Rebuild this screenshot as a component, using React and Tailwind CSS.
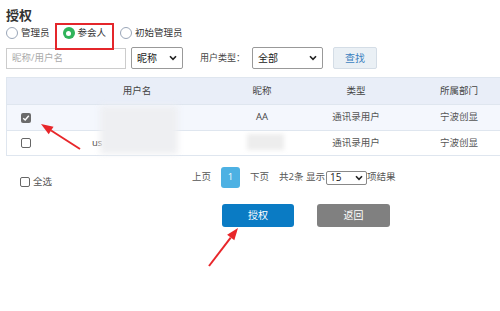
import React from 'react';

const font = { fontFamily: '"Open Sans", "Noto Sans CJK SC", sans-serif' };

const Radio = ({ checked, label }) => (
  <label className="flex items-center gap-[3px]">
    {checked ? (
      <span className="w-[12px] h-[12px] rounded-full bg-[#2fb35a] flex items-center justify-center">
        <span className="w-[5px] h-[5px] rounded-full bg-white" />
      </span>
    ) : (
      <span className="w-[12px] h-[12px] rounded-full border border-[#9aa6b8] bg-white" />
    )}
    <span className="text-[9.5px] text-[#333]">{label}</span>
  </label>
);

const Check = ({ checked }) =>
  checked ? (
    <span className="w-[10px] h-[10px] rounded-[2px] bg-[#6b6b6b] flex items-center justify-center">
      <svg width="8" height="8" viewBox="0 0 8 8">
        <path d="M1.2 4.2 L3.2 6 L6.8 1.8" stroke="#fff" strokeWidth="1.4" fill="none" />
      </svg>
    </span>
  ) : (
    <span className="block w-[10px] h-[10px] rounded-[2px] border border-[#666] bg-white" />
  );

const Caret = () => (
  <svg width="8" height="6" viewBox="0 0 8 6">
    <path d="M1 1.2 L4 4.3 L7 1.2" stroke="#222" strokeWidth="1.6" fill="none" />
  </svg>
);

const Arrow = ({ x1, y1, x2, y2 }) => {
  const dx = x2 - x1;
  const dy = y2 - y1;
  const len = Math.sqrt(dx * dx + dy * dy);
  const ux = dx / len;
  const uy = dy / len;
  const bx = x2 - ux * 12;
  const by = y2 - uy * 12;
  const px = -uy * 4.5;
  const py = ux * 4.5;
  return (
    <g>
      <line x1={x1} y1={y1} x2={bx} y2={by} stroke="#e8262a" strokeWidth="2" />
      <polygon points={`${x2},${y2} ${bx + px},${by + py} ${bx - px},${by - py}`} fill="#e8262a" />
    </g>
  );
};

export default function App() {
  return (
    <div className="relative w-[500px] h-[311px] bg-white overflow-hidden" style={font}>
      <div className="pl-[6px] pt-[7px]">
        <h1 className="text-[13px] font-bold text-[#333] leading-[16px]">授权</h1>

        {/* role radios */}
        <div className="flex items-center h-[16px] mt-[2px]">
          <Radio label="管理员" />
          <div className="ml-[13px]"><Radio checked label="参会人" /></div>
          <div className="ml-[14px]"><Radio label="初始管理员" /></div>
        </div>

        {/* search bar */}
        <div className="flex items-center mt-[6px] h-[22px]">
          <div className="w-[120px] h-[21px] border border-[#ccc] bg-white px-[5px] flex items-center text-[9.5px] text-[#aaa]">
            昵称/用户名
          </div>
          <div className="ml-[5px] w-[52px] h-[22px] border border-[#999] rounded-[2px] flex items-center justify-between px-[5px] text-[10px] text-[#222]">
            <span>昵称</span>
            <Caret />
          </div>
          <span className="ml-[17px] text-[9px] text-[#444]">用户类型：</span>
          <div className="ml-[7px] w-[71px] h-[22px] border border-[#999] rounded-[2px] flex items-center justify-between px-[5px] text-[10px] text-[#222]">
            <span>全部</span>
            <Caret />
          </div>
          <div className="ml-[10px] w-[44px] h-[22px] rounded-[2px] border border-[#d4dde6] bg-[#eaf0f5] flex items-center justify-center text-[10px] text-[#3a7fc0]">
            查找
          </div>
        </div>

        {/* table */}
        <div className="mt-[8px] w-[510px] border-l border-b border-[#dfe6ef] text-[9.5px] text-[#555]">
          <div className="flex items-center h-[27px] bg-[#e9eef8] border-t border-[#dfe6ef] text-[#444]">
            <div className="w-[44px]" />
            <div className="w-[172px] text-center">用户名</div>
            <div className="w-[78px] text-center">昵称</div>
            <div className="w-[110px] text-center">类型</div>
            <div className="w-[96px] text-center">所属部门</div>
          </div>
          <div className="flex items-center h-[26px] bg-[#f4f7fd] border-t border-[#dfe6ef]">
            <div className="w-[44px] pl-[14px]"><Check checked /></div>
            <div className="w-[172px]" />
            <div className="w-[78px] text-center text-[#444]">AA</div>
            <div className="w-[110px] text-center">通讯录用户</div>
            <div className="w-[96px] text-center">宁波创显</div>
          </div>
          <div className="flex items-center h-[25px] bg-white border-t border-[#dfe6ef]">
            <div className="w-[44px] pl-[14px]"><Check /></div>
            <div className="w-[172px] pl-[41px] text-[#444]">us</div>
            <div className="w-[78px]" />
            <div className="w-[110px] text-center">通讯录用户</div>
            <div className="w-[96px] text-center">宁波创显</div>
          </div>
        </div>

        {/* pagination */}
        <div className="flex items-center mt-[11px] h-[21px] text-[9.5px] text-[#555]">
          <div className="pl-[14px] flex items-center gap-[3px] mt-[9px]">
            <Check />
            <span>全选</span>
          </div>
          <span className="ml-[140px]">上页</span>
          <div className="ml-[10px] w-[19px] h-[21px] rounded-[3px] bg-[#4db1e3] text-white flex items-center justify-center">1</div>
          <span className="ml-[10px]">下页</span>
          <span className="ml-[10px]">共2条 显示</span>
          <div className="ml-[1px] w-[41px] h-[14px] border border-[#888] rounded-[2px] flex items-center justify-between px-[3px] text-[10px] text-[#222]">
            <span>15</span>
            <Caret />
          </div>
          <span>项结果</span>
        </div>

        {/* actions */}
        <div className="flex gap-[23px] mt-[16px] ml-[216px]">
          <div className="w-[72px] h-[23px] rounded-[3px] bg-[#0a7bc4] text-white text-[10px] flex items-center justify-center">授权</div>
          <div className="w-[73px] h-[23px] rounded-[3px] bg-[#808080] text-white text-[10px] flex items-center justify-center">返回</div>
        </div>
      </div>

      {/* blurred private data */}
      <div className="absolute left-[100px] top-[106px] w-[78px] h-[48px] bg-[#eeeff2] blur-[3px]" />
      <div className="absolute left-[247px] top-[134px] w-[37px] h-[16px] bg-[#ededed] blur-[2px]" />

      {/* annotations */}
      <div className="absolute left-[55px] top-[23px] w-[59px] h-[27px] border-2 border-[#e4262b]" />
      <svg className="absolute left-0 top-0" width="500" height="311">
        <Arrow x1={80} y1={149} x2={41} y2={124} />
        <Arrow x1={209} y1={266} x2={238} y2={228} />
      </svg>
    </div>
  );
}
